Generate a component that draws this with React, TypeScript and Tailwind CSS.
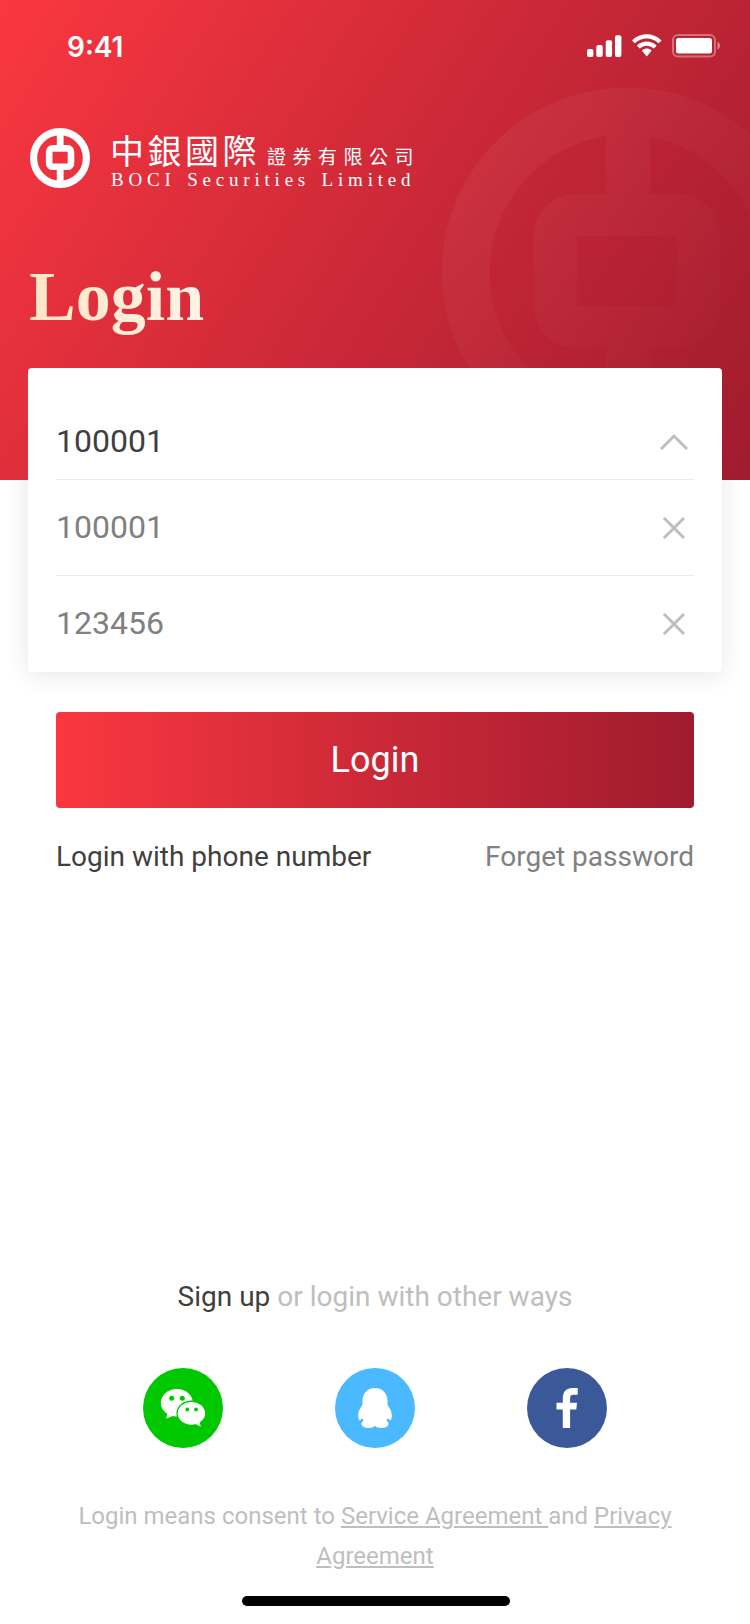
import React from "react";

const CoinMark = ({ className }: { className: string }) => (
  <svg viewBox="0 0 60 60" className={className} fill="none" stroke="white">
    <circle cx="30" cy="30" r="26.4" strokeWidth="7.2" />
    <rect x="19.2" y="20.4" width="21.8" height="18.4" rx="3.4" strokeWidth="6.6" />
    <path d="M30.2 6v12M30.2 41v13" strokeWidth="6.8" />
  </svg>
);

const Watermark = () => (
  <svg viewBox="0 0 750 480" className="absolute inset-0 h-[480px] w-[750px]">
    <defs>
      <linearGradient id="fade" gradientUnits="userSpaceOnUse" x1="470" y1="150" x2="730" y2="400">
        <stop offset="0" stopColor="#ffd8d8" stopOpacity="0.055" />
        <stop offset="1" stopColor="#ffd8d8" stopOpacity="0" />
      </linearGradient>
    </defs>
    <path
      fill="url(#fade)"
      fillRule="evenodd"
      d="M627 87.500A185 184 0 1 1 627 455.500A185 184 0 1 1 627 87.500Z M606 136A138.500 138 0 0 0 606 408.500V348H576A42 42 0 0 1 534 306V236A42 42 0 0 1 576 194H606Z M650 136.500V194H678A42 42 0 0 1 720 236V306A42 42 0 0 1 678 348H650V407.500A138.500 138 0 0 0 650 136.500Z M576.700 236H676.700V306H576.700Z"
    />
  </svg>
);

const StatusIcons = () => (
  <svg viewBox="0 0 136 26" className="h-[26px] w-[136px]" fill="white">
    <rect x="1" y="15" width="6.400" height="8" rx="1.900" />
    <rect x="10.300" y="11" width="6.400" height="12" rx="1.900" />
    <rect x="19.700" y="6.300" width="6.400" height="16.700" rx="1.900" />
    <rect x="29" y="1.300" width="6.400" height="21.700" rx="1.900" />
    <path d="M60.700 4.600c4.400 0 8.400 1.700 11.400 4.500.2.200.6.200.8 0l2.200-2.200c.3-.3.300-.7 0-.9-8-7.600-20.700-7.600-28.700 0-.3.200-.3.600 0 .9l2.200 2.200c.2.200.6.200.8 0 3-2.800 6.900-4.500 11.300-4.500z" />
    <path d="M60.700 11.800c2.400 0 4.700.9 6.500 2.500.3.200.6.200.9 0l2.200-2.200c.2-.3.200-.7 0-.9-5.400-5-13.700-5-19.100 0-.2.200-.2.600 0 .9l2.200 2.200c.3.200.6.200.9 0 1.700-1.600 4-2.500 6.400-2.500z" />
    <path d="M65.300 16.200c.3.200.3.600 0 .9l-4.100 4.900c-.2.300-.7.300-.9 0l-4.100-4.900c-.3-.3-.3-.7 0-.9 2.600-2.200 6.500-2.200 9.100 0z" />
    <rect x="87" y="1" width="42" height="21.500" rx="5" fill="none" stroke="white" strokeOpacity="0.350" strokeWidth="2" />
    <rect x="90" y="4" width="36" height="15.500" rx="2.500" />
    <path d="M131.500 7.800c3.300 1.300 3.300 6.600 0 7.900z" fillOpacity="0.450" />
  </svg>
);

const CloseIcon = () => (
  <svg viewBox="0 0 24 24" className="mr-2 h-6 w-6" fill="none" stroke="#bebebe" strokeWidth="3">
    <path d="M2 2l20 20M22 2L2 22" />
  </svg>
);

const accounts = ["100001", "123456"];

export default function App() {
  return (
    <div className="flex h-[1624px] w-[750px] flex-col bg-white font-['Roboto',sans-serif]">
      <header className="relative z-10 h-[480px] shrink-0 bg-[linear-gradient(122.6deg,#fa3741_0%,#ca2837_53%,#a01b2e_100%)]">
        <Watermark />
        <div className="relative flex h-[128px] items-start justify-between pt-[34px] pr-[28px] pl-[67px]">
          <span className="-mt-px font-['Inter',sans-serif] text-[28px] leading-7 font-semibold text-white">9:41</span>
          <StatusIcons />
        </div>
        <div className="relative flex h-[60px] pl-[30px] text-white">
          <CoinMark className="h-[60px] w-[60px]" />
          <div className="ml-5 whitespace-nowrap">
            <div className="flex h-[41px] items-baseline pt-1 font-['Noto_Sans_CJK_TC',sans-serif]">
              <span className="text-[34px] leading-9 tracking-[3.500px]">中銀國際</span>
              <span className="ml-[7px] text-[19px] leading-9 tracking-[6.500px]">證券有限公司</span>
            </div>
            <div className="pl-[1px] font-['Liberation_Serif',serif] text-[19px] leading-[22px] tracking-[4.800px] [word-spacing:2px]">
              BOCI Securities Limited
            </div>
          </div>
        </div>
        <h1 className="relative mt-[69px] ml-[29px] w-[180px] bg-linear-to-r from-[#ffe5c4] to-[#fff4e8] bg-clip-text font-['Liberation_Serif',serif] text-[70px] leading-[80px] font-bold text-transparent">
          Login
        </h1>
      </header>

      <main className="-mt-[112px] px-7">
        <div className="relative">
          <div className="absolute inset-0 rounded-[4px] shadow-[0_3px_24px_rgba(0,0,0,0.1)]" />
          <section className="relative z-20 rounded-[4px] bg-white px-7 pt-[34px] text-[32px]">
            <div className="flex h-[78px] items-center justify-between border-b border-[#ebebeb] text-[#3f3f3f]">
              <span>100001</span>
              <svg viewBox="0 0 28 18" className="mt-[3px] mr-1.5 h-[18px] w-7" fill="none" stroke="#bebebe" strokeWidth="3">
                <path d="M1 16L14 3l13 13" />
              </svg>
            </div>
            {accounts.map((account) => (
              <div
                key={account}
                className="flex h-24 items-center justify-between border-b border-[#ebebeb] text-[#808080] last:border-transparent"
              >
                <span className="pb-0.5">{account}</span>
                <CloseIcon />
              </div>
            ))}
          </section>
        </div>
        <div className="px-7 pt-10">
          <button className="block h-24 w-full rounded-[4px] bg-[linear-gradient(90deg,#fa3741_0%,#ca2837_52%,#a01b2e_100%)] text-[36px] text-white">
            Login
          </button>
          <div className="mt-[29px] flex justify-between text-[28px] leading-10">
            <a className="text-[#3f3f3f]">Login with phone number</a>
            <a className="text-[#808080]">Forget password</a>
          </div>
        </div>
      </main>

      <footer className="mt-auto flex flex-col items-center pb-[18px]">
        <p className="text-[28px] leading-10 text-[#bebebe]">
          <span className="text-[#3f3f3f]">Sign up</span> or login with other ways
        </p>
        <div className="mt-[51px] flex gap-28">
          <svg viewBox="0 0 80 80" className="h-20 w-20">
            <circle cx="40" cy="40" r="40" fill="#00c800" />
            <ellipse cx="33.800" cy="34.800" rx="16" ry="13.800" fill="white" />
            <path fill="white" d="M24.500 44.500L23.200 50.800L30 47.800z" />
            <ellipse cx="48.400" cy="45.300" rx="15" ry="12.700" fill="#00c800" />
            <ellipse cx="48.400" cy="45.300" rx="13.700" ry="11.400" fill="white" />
            <path fill="white" d="M52 55.800L57.800 58.700L56.300 53z" />
            <g fill="#00c800">
              <circle cx="28.700" cy="30.200" r="2.500" />
              <circle cx="39.300" cy="30.200" r="2.500" />
              <circle cx="44.300" cy="41.500" r="1.900" />
              <circle cx="53" cy="41.500" r="1.900" />
            </g>
          </svg>
          <svg viewBox="0 0 80 80" className="h-20 w-20">
            <circle cx="40" cy="40" r="40" fill="#4ab9ff" />
            <path fill="white" d="M40 20c-8 0-12.500 6-12.500 13 0 2 .2 3.500-.7 5-2.300 3-3.600 6-3.600 9.500 0 3 .8 4.800 1.500 4.800s1.500-1 2-2l1.800 1.500-.5 1.500c-1 .5-1.500 1.500-1.500 2.500 0 2.500 3 4.200 7 4.200 3 0 5.300-1 6.500-2.300 1.200 1.300 3.500 2.300 6.500 2.300 4 0 7-1.700 7-4.200 0-1-.5-2-1.500-2.500l-.5-1.500 1.800-1.500c.5 1 1.300 2 2 2s1.500-1.800 1.500-4.800c0-3.500-1.300-6.500-3.600-9.500-.9-1.500-.7-3-.7-5C52.500 26 48 20 40 20z" />
          </svg>
          <svg viewBox="0 0 80 80" className="h-20 w-20">
            <circle cx="40" cy="40" r="40" fill="#3b5998" />
            <path fill="white" d="M35.800 60V41.500h-6.300v-6.700h6.300v-4.300c0-7 3.500-10.500 9.700-10.500h5.200v6.700h-4.200c-2.700 0-3.400 1.200-3.400 3.500v4.600h6.900l-.7 6.700h-6.200v18.500z" />
          </svg>
        </div>
        <p className="mt-12 w-[620px] text-center text-[24px] leading-10 text-[#bebebe]">
          Login means consent to <u>Service Agreement </u>and <u>Privacy Agreement</u>
        </p>
        <div className="mt-5 ml-0.5 h-2.5 w-[268px] rounded-full bg-black" />
      </footer>
    </div>
  );
}
